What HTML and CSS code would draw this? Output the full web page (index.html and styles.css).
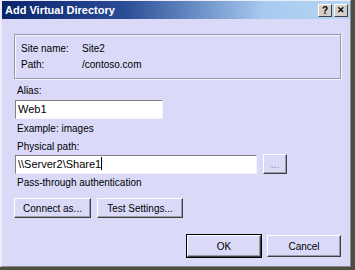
FILE: index.html
```html
<!DOCTYPE html>
<html lang="en">

<head>
    <meta charset="UTF-8">
    <title>Add Virtual Directory</title>
    <link rel="stylesheet" href="styles.css">
</head>

<body>
    <div class="window">
        <div class="titlebar">
            <span class="title">Add Virtual Directory</span>
            <div class="title-buttons">
                <span class="tbtn">?</span>
                <span class="tbtn close">&#x2715;</span>
            </div>
        </div>

        <div class="content">
            <div class="info-box">
                <div class="info-row"><span class="info-key">Site name:</span><span>Site2</span></div>
                <div class="info-row"><span class="info-key">Path:</span><span>/contoso.com</span></div>
            </div>

            <div class="label alias-label">Alias:</div>
            <div class="field alias-field">Web1</div>
            <div class="label example">Example: images</div>

            <div class="label path-label">Physical path:</div>
            <div class="path-row">
                <div class="field path-field">\\Server2\Share1<span class="caret"></span></div>
                <button class="btn browse">...</button>
            </div>
            <div class="label pass">Pass-through authentication</div>

            <div class="btn-row">
                <button class="btn connect">Connect as...</button>
                <button class="btn test">Test Settings...</button>
            </div>

            <div class="footer-row">
                <button class="btn ok"><span class="focus">OK</span></button>
                <button class="btn">Cancel</button>
            </div>
        </div>
    </div>
</body>

</html>
```

FILE: styles.css
```css
* {
    margin: 0;
    padding: 0;
    box-sizing: border-box;
    font-family: 'Liberation Sans', Arial, sans-serif;
}

body {
    background-color: #4e4e3e;
    width: 355px;
    height: 270px;
    overflow: hidden;
}

.window {
    width: 351px;
    height: 267px;
    background-color: #dadaf8;
    border-left: 2px solid #ececfa;
    border-top: 1px solid #ececfa;
    border-right: 1px solid #8a8a90;
    border-bottom: 1px solid #8a8a90;
    font-size: 10px;
    color: #000;
}

.titlebar {
    height: 18px;
    background: linear-gradient(to right, #0a246a 0%, #2a4c96 35%, #a6caf0 75%, #b8d6f2 100%);
    display: flex;
    justify-content: space-between;
    align-items: center;
    padding: 0 2px 0 3px;
}

.title {
    color: #fff;
    font-weight: 700;
    font-size: 11px;
}

.title-buttons {
    display: flex;
    gap: 2px;
}

.tbtn {
    width: 14px;
    height: 13px;
    background-color: #d4d0c8;
    border-top: 1px solid #fff;
    border-left: 1px solid #fff;
    border-right: 1px solid #404040;
    border-bottom: 1px solid #404040;
    font-size: 10px;
    font-weight: 700;
    line-height: 11px;
    text-align: center;
}

.close {
    font-size: 9px;
}

.content {
    padding: 15px 9px 0 12px;
}

.info-box {
    height: 45px;
    border: 1px solid #9a9aa8;
    box-shadow: 1px 1px 0 #f4f4fc, inset 1px 1px 0 #f4f4fc;
    padding: 7px 0 0 6px;
}

.info-row {
    height: 16px;
    line-height: 14px;
    display: flex;
}

.info-key {
    width: 61px;
}

.label {
    height: 14px;
    line-height: 14px;
    padding-left: 3px;
}

.alias-label {
    margin-top: 5px;
}

.field {
    background-color: #fff;
    height: 19px;
    line-height: 16px;
    font-size: 11px;
    padding-left: 2px;
    border-top: 1px solid #808080;
    border-left: 1px solid #808080;
    border-right: 1px solid #f4f4fc;
    border-bottom: 1px solid #f4f4fc;
    margin-left: 1px;
}

.alias-field {
    width: 148px;
    margin-top: 2px;
}

.example {
    margin-top: 3px;
}

.path-label {
    margin-top: 4px;
}

.path-row {
    display: flex;
    align-items: center;
    gap: 6px;
    margin-top: 0;
}

.path-field {
    width: 242px;
}

.caret {
    display: inline-block;
    width: 1px;
    height: 13px;
    background-color: #000;
    vertical-align: -2px;
}

.btn {
    background-color: #dadaf8;
    font-size: 10px;
    height: 20px;
    border-top: 1px solid #fff;
    border-left: 1px solid #fff;
    border-right: 1px solid #404040;
    border-bottom: 1px solid #404040;
    box-shadow: inset -1px -1px 0 #9a9aa8;
    color: #000;
}

.browse {
    width: 24px;
    height: 20px;
    color: #808080;
    font-size: 10px;
}

.pass {
    margin-top: 2px;
}

.btn-row {
    display: flex;
    gap: 6px;
    margin-top: 8px;
}

.connect {
    width: 77px;
}

.test {
    width: 86px;
}

.footer-row {
    display: flex;
    justify-content: flex-end;
    gap: 6px;
    margin-top: 17px;
}

.footer-row .btn {
    width: 74px;
    height: 22px;
}

.ok {
    outline: 1px solid #000;
    outline-offset: 0;
}

.focus {
    display: inline-block;
    padding: 1px 3px;
}
```
